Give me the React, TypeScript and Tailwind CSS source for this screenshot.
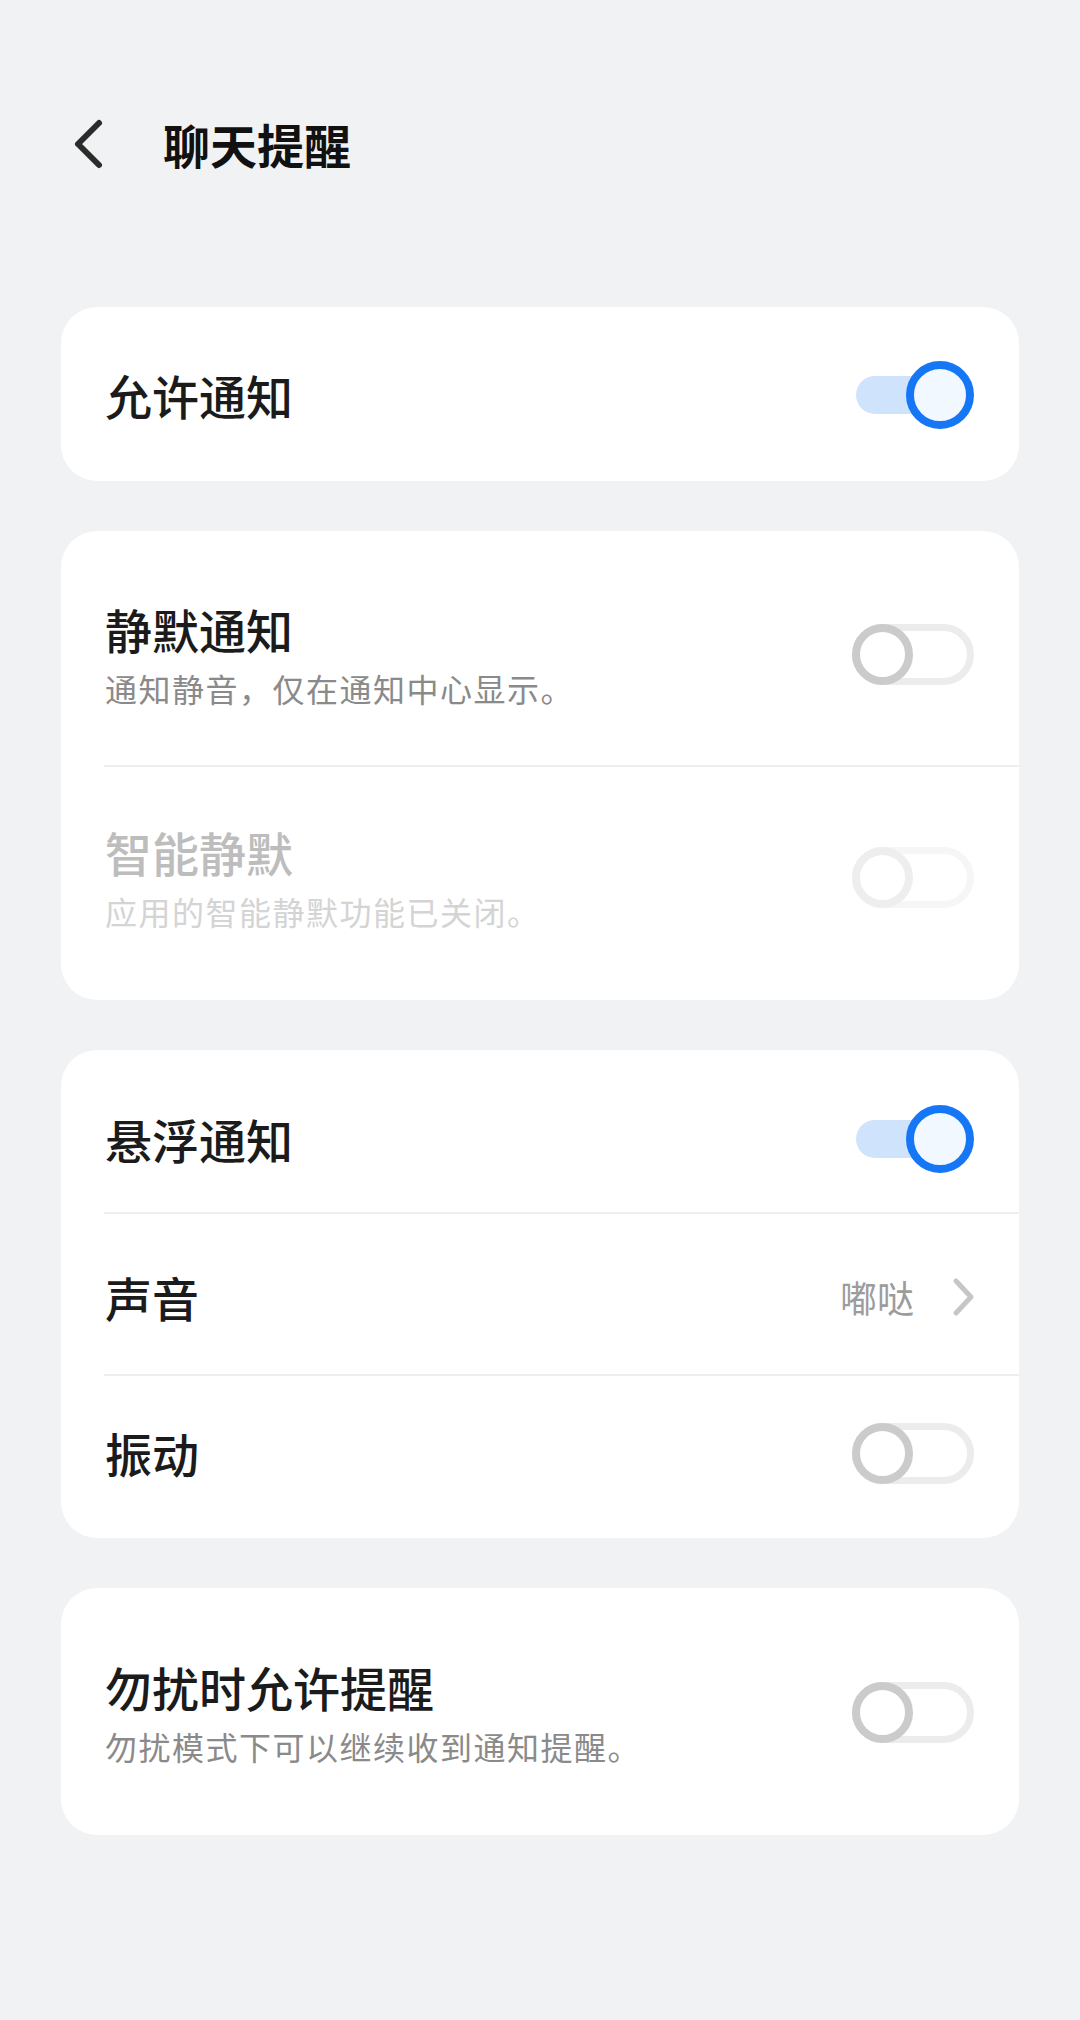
import React from "react";

const font = "font-['Noto_Sans_CJK_SC','Noto_Sans',sans-serif]";

function SwitchOn() {
  return (
    <div className="relative h-[68px] w-[122px] shrink-0">
      <div className="absolute left-[4px] top-[15px] h-[38px] w-[104px] rounded-full bg-[#cfe3fd]" />
      <div className="absolute right-0 top-0 h-[68px] w-[68px] rounded-full border-[8px] border-[#1677f6] bg-[#f2f8ff]" />
    </div>
  );
}

function SwitchOff({ disabled }: { disabled?: boolean }) {
  return (
    <div className="relative h-[61px] w-[122px] shrink-0">
      <div
        className={
          disabled
            ? "absolute inset-0 rounded-full border-[7px] border-[#f6f6f6]"
            : "absolute inset-0 rounded-full border-[7px] border-[#ececec]"
        }
      />
      <div
        className={
          disabled
            ? "absolute left-0 top-0 h-[61px] w-[61px] rounded-full border-[8px] border-[#eeeeee] bg-white"
            : "absolute left-0 top-0 h-[61px] w-[61px] rounded-full border-[8px] border-[#cbcbcb] bg-white"
        }
      />
    </div>
  );
}

function Row({
  label,
  desc,
  disabled,
  right,
  className,
}: {
  label: string;
  desc?: string;
  disabled?: boolean;
  right: React.ReactNode;
  className?: string;
}) {
  return (
    <div className={"flex items-center justify-between pl-[44px] pr-[45px] " + (className ?? "")}>
      <div className="flex flex-col">
        <span
          className={
            "text-[47px] font-medium leading-[60px] " +
            (disabled ? "text-[#bdbdbd]" : "text-[#1b1b1b]")
          }
        >
          {label}
        </span>
        {desc && (
          <span
            className={
              "mt-[7px] text-[32px] leading-[44px] tracking-[1.5px] " +
              (disabled ? "text-[#d4d4d4]" : "text-[#8a8a8a]")
            }
          >
            {desc}
          </span>
        )}
      </div>
      {right}
    </div>
  );
}

function Divider() {
  return <div className="ml-[43px] h-[2px] bg-[#eeeeee]" />;
}

function Card({ children }: { children: React.ReactNode }) {
  return <div className="overflow-hidden rounded-[36px] bg-white">{children}</div>;
}

export default function App() {
  return (
    <div className={"min-h-[2020px] w-full bg-[#f1f2f4] pt-[96px] " + font}>
      <div className="flex h-[96px] items-center">
        <svg width="40" height="52" viewBox="0 0 40 52" className="ml-[68px]">
          <path
            d="M31 5 L10 26 L31 47"
            fill="none"
            stroke="#2b2b2b"
            strokeWidth="6"
            strokeLinecap="round"
            strokeLinejoin="round"
          />
        </svg>
        <span className="ml-[55px] text-[47px] font-bold leading-[60px] text-[#111111]">
          聊天提醒
        </span>
      </div>

      <div className="mt-[115px] flex flex-col gap-[50px] px-[61px]">
        <Card>
          <Row label="允许通知" right={<SwitchOn />} className="h-[174px] pt-[2px]" />
        </Card>

        <Card>
          <Row
            label="静默通知"
            desc="通知静音，仅在通知中心显示。"
            right={<SwitchOff />}
            className="h-[234px] pt-[13px]"
          />
          <Divider />
          <Row
            label="智能静默"
            desc="应用的智能静默功能已关闭。"
            disabled
            right={<SwitchOff disabled />}
            className="h-[233px] pb-[12px]"
          />
        </Card>

        <Card>
          <Row label="悬浮通知" right={<SwitchOn />} className="h-[162px] pt-[15px]" />
          <Divider />
          <Row
            label="声音"
            className="h-[160px] pt-[6px] !pr-[43px]"
            right={
              <div className="flex items-center">
                <span className="text-[37px] leading-[48px] text-[#9c9c9c]">嘟哒</span>
                <svg width="24" height="40" viewBox="0 0 24 40" className="ml-[38px]">
                  <path
                    d="M4 4 L19 20 L4 36"
                    fill="none"
                    stroke="#c6c6c6"
                    strokeWidth="5"
                    strokeLinecap="round"
                    strokeLinejoin="round"
                  />
                </svg>
              </div>
            }
          />
          <Divider />
          <Row label="振动" right={<SwitchOff />} className="h-[162px] pb-[8px]" />
        </Card>

        <Card>
          <Row
            label="勿扰时允许提醒"
            desc="勿扰模式下可以继续收到通知提醒。"
            right={<SwitchOff />}
            className="h-[247px] pt-[2px]"
          />
        </Card>
      </div>
    </div>
  );
}
